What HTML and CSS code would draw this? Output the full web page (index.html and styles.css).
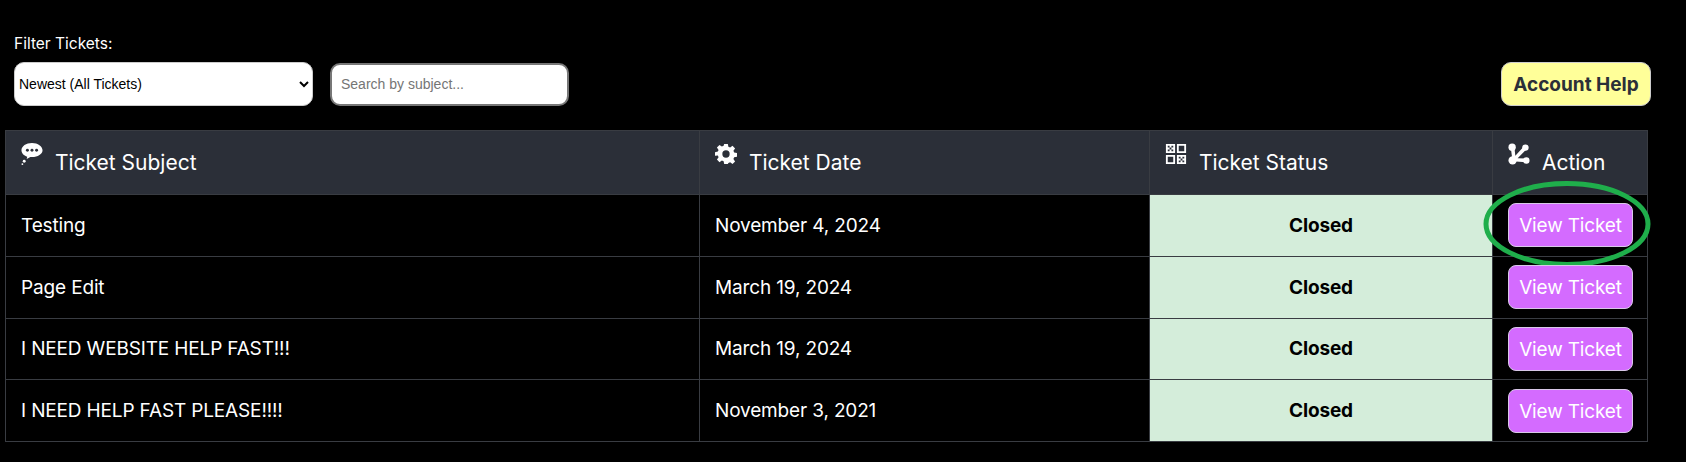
FILE: index.html
```html
<!Doctype html>
<html>
    <head>
        <meta charset="utf-8">
        <title>Tickets</title>
        <link rel="stylesheet" href="styles.css">
    </head>
    <body>
        <div class="toolbar">
            <div class="filters">
                <label class="filter-label" for="filter">Filter Tickets:</label>
                <div class="filter-row">
                    <select id="filter" class="filter-select">
                        <option>Newest (All Tickets)</option>
                    </select>
                    <input type="text" class="filter-search" placeholder="Search by subject...">
                </div>
            </div>
            <a class="help-btn" href="#">Account Help</a>
        </div>
        <table class="tickets" cellspacing="0">
            <thead>
                <tr>
                    <th class="col-subject">
                        <svg class="th-icon" viewBox="0 0 24 24"><path d="M12 0C5.600 0 .5 3.400 .5 8c0 3.200 2.600 5.800 6.300 7l-.6 2.400 4-2.100c.6 .1 1.200 .1 1.800 .1 6.400 0 11.500-3.200 11.500-7.400S18.400 0 12 0z"/><circle cx="3.500" cy="20" r="1.600"/><circle cx="1.500" cy="23" r="1"/><circle cx="7" cy="8" r="1.600" fill="#2b2f38"/><circle cx="12" cy="8" r="1.600" fill="#2b2f38"/><circle cx="17" cy="8" r="1.600" fill="#2b2f38"/></svg>
                        Ticket Subject
                    </th>
                    <th class="col-date">
                        <svg class="th-icon" viewBox="0 0 24 24"><path fill-rule="evenodd" d="M10 1h4l.6 3.100 1.900 .8 2.600-1.800 2.800 2.800-1.800 2.600 .8 1.900 3.100 .6v4l-3.100 .6-.8 1.900 1.800 2.600-2.800 2.800-2.600-1.800-1.900 .8L14 23h-4l-.6-3.100-1.900-.8-2.600 1.800-2.800-2.800 1.800-2.600-.8-1.900L0 14v-4l3.100-.6 .8-1.900-1.800-2.600 2.800-2.800 2.600 1.800 1.900-.8zM12 8a4 4 0 1 0 0 8 4 4 0 0 0 0-8z"/></svg>
                        Ticket Date
                    </th>
                    <th class="col-status">
                        <svg class="th-icon" viewBox="0 0 24 24"><path fill-rule="evenodd" d="M1 1h10v10H1zM13 1h10v10H13zM15 3v6h6V3zM1 13h10v10H1zM3 15v6h6v-6zM13 13h10v10H13z"/><path fill="#2b2f38" d="M3 3h2v2H3zM7 3h2v2H7zM5 5h2v2H5zM3 7h2v2H3zM7 7h2v2H7zM15 15h2v2h-2zM19 15h2v2h-2zM17 17h2v2h-2zM15 19h2v2h-2zM19 19h2v2h-2z"/></svg>
                        Ticket Status
                    </th>
                    <th class="col-action">
                        <svg class="th-icon" viewBox="0 0 24 24"><path d="M3 5h4l1 9 9-10 3 3-9.500 9.500L20 17v4L5 20z"/><circle cx="4.500" cy="4.500" r="4"/><circle cx="19" cy="5" r="3.500"/><circle cx="5" cy="19" r="4.500"/><circle cx="20" cy="19" r="3.500"/></svg>
                        Action
                    </th>
                </tr>
            </thead>
            <tbody>
                <tr>
                    <td>Testing</td>
                    <td>November 4, 2024</td>
                    <td class="status">Closed</td>
                    <td class="action">
                        <a class="view-btn" href="#">View Ticket</a>
                        <svg class="highlight" viewBox="0 0 168 86"><ellipse cx="84" cy="43" rx="81" ry="40.500"/></svg>
                    </td>
                </tr>
                <tr>
                    <td>Page Edit</td>
                    <td>March 19, 2024</td>
                    <td class="status">Closed</td>
                    <td class="action"><a class="view-btn" href="#">View Ticket</a></td>
                </tr>
                <tr>
                    <td>I NEED WEBSITE HELP FAST!!!</td>
                    <td>March 19, 2024</td>
                    <td class="status">Closed</td>
                    <td class="action"><a class="view-btn" href="#">View Ticket</a></td>
                </tr>
                <tr>
                    <td>I NEED HELP FAST PLEASE!!!!</td>
                    <td>November 3, 2021</td>
                    <td class="status">Closed</td>
                    <td class="action"><a class="view-btn" href="#">View Ticket</a></td>
                </tr>
            </tbody>
        </table>
    </body>
</html>
```

FILE: styles.css
```css
body{
    margin: 0;
    background: #000000;
    color: #ffffff;
    font-family: "Inter", "Liberation Sans", sans-serif;
}

.toolbar{
    display: flex;
    align-items: flex-end;
    justify-content: space-between;
    height: 106px;
    padding: 0 35px 0 14px;
}

.filter-label{
    display: block;
    font-size: 15.5px;
    line-height: 18px;
    margin-bottom: 9px;
}

.filter-row{
    display: flex;
    align-items: center;
    gap: 17px;
}

.filter-select{
    width: 299px;
    height: 44px;
    padding: 0;
    border: 1px solid #cccccc;
    border-radius: 10px;
    background: #ffffff;
    color: #000000;
    font-family: "Liberation Sans", sans-serif;
    font-size: 14px;
}

.filter-search{
    box-sizing: border-box;
    width: 239px;
    height: 43px;
    padding: 0 9px;
    border: 2px solid #777777;
    border-radius: 10px;
    background: #ffffff;
    font-family: "Liberation Sans", sans-serif;
    font-size: 14px;
}

.filter-search::placeholder{
    color: #757575;
}

.help-btn{
    box-sizing: border-box;
    width: 150px;
    height: 44px;
    border: 1px solid #cccccc;
    border-radius: 10px;
    background: #ffff99;
    color: #2b2f38;
    font-size: 19px;
    font-weight: 700;
    line-height: 43px;
    text-align: center;
    text-decoration: none;
}

.tickets{
    margin: 24px 0 0 5px;
    width: 1643px;
    table-layout: fixed;
    border-collapse: collapse;
    font-size: 19px;
    letter-spacing: -.15px;
}

.tickets th{
    height: 55px;
    padding: 0 15px 8px;
    border: 1px solid #393c42;
    background: #2b2f38;
    font-size: 21px;
    font-weight: 400;
    letter-spacing: 0;
    text-align: left;
}

.col-subject{ width: 663px; }
.col-date{ width: 419px; }
.col-status{ width: 312px; }

.th-icon{
    width: 22px;
    height: 22px;
    margin-right: 6px;
    vertical-align: 5px;
    fill: #ffffff;
}

.tickets td{
    height: 60.8px;
    padding: 0 15px;
    border: 1px solid #393c42;
}

.tickets td.status{
    background: #d4edda;
    color: #000000;
    font-weight: 700;
    text-align: center;
}

.tickets td.action{
    position: relative;
    padding: 0 15px;
}

.view-btn{
    display: block;
    box-sizing: border-box;
    height: 44px;
    width: 125px;
    border: 1px solid #d8c8e8;
    border-radius: 8px;
    background: #d46bff;
    color: #ffffff;
    font-size: 19px;
    line-height: 43px;
    text-align: center;
    text-decoration: none;
}

/* green circle drawn over the first button */
.highlight{
    position: absolute;
    left: -10px;
    top: -14px;
    width: 168px;
    height: 86px;
    fill: none;
    stroke: #1fae4b;
    stroke-width: 5;
    pointer-events: none;
}
```
